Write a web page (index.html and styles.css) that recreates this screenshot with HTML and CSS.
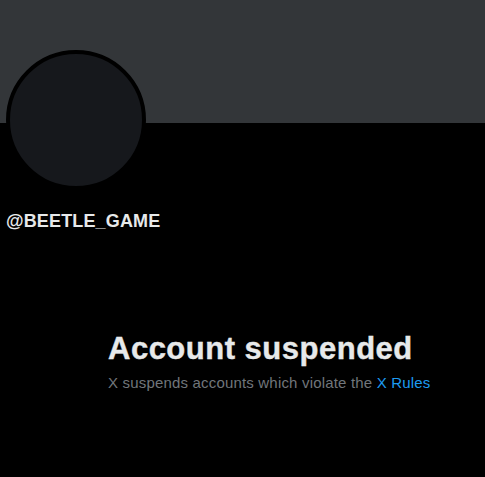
FILE: index.html
```html
<!DOCTYPE html>
<html>
<head>
<meta charset="utf-8">
<link rel="stylesheet" href="styles.css">
</head>
<body>
<div class="page">
  <div class="banner"></div>
  <div class="profile">
    <div class="avatar"></div>
    <div class="handle">@BEETLE_GAME</div>
  </div>
  <div class="empty">
    <h1 class="title">Account suspended</h1>
    <p class="desc">X suspends accounts which violate the <a class="link" href="#">X Rules</a></p>
  </div>
</div>
</body>
</html>
```
FILE: styles.css
```css
html, body {
  margin: 0;
  padding: 0;
  background: #000;
}
.page {
  width: 485px;
  height: 477px;
  overflow: hidden;
  font-family: "Liberation Sans", Arial, sans-serif;
  color: #e7e9ea;
}
.banner {
  height: 123px;
  background: #333639;
}
.profile {
  padding-left: 6px;
}
.avatar {
  width: 132px;
  height: 132px;
  margin-top: -73px;
  border: 4px solid #000;
  border-radius: 50%;
  background: #16181c;
}
.handle {
  margin-top: 20px;
  font-size: 18px;
  font-weight: 700;
  line-height: 22px;
  letter-spacing: 0.15px;
}
.empty {
  padding-left: 108px;
  padding-top: 99px;
}
.title {
  margin: 0;
  font-size: 31px;
  font-weight: 700;
  line-height: 36px;
  letter-spacing: 0.5px;
  -webkit-text-stroke: 0.4px #e7e9ea;
}
.desc {
  margin: 6px 0 0;
  font-size: 15px;
  line-height: 20px;
  letter-spacing: 0.18px;
  color: #71767b;
}
.link {
  color: #1d9bf0;
  text-decoration: none;
}
```
